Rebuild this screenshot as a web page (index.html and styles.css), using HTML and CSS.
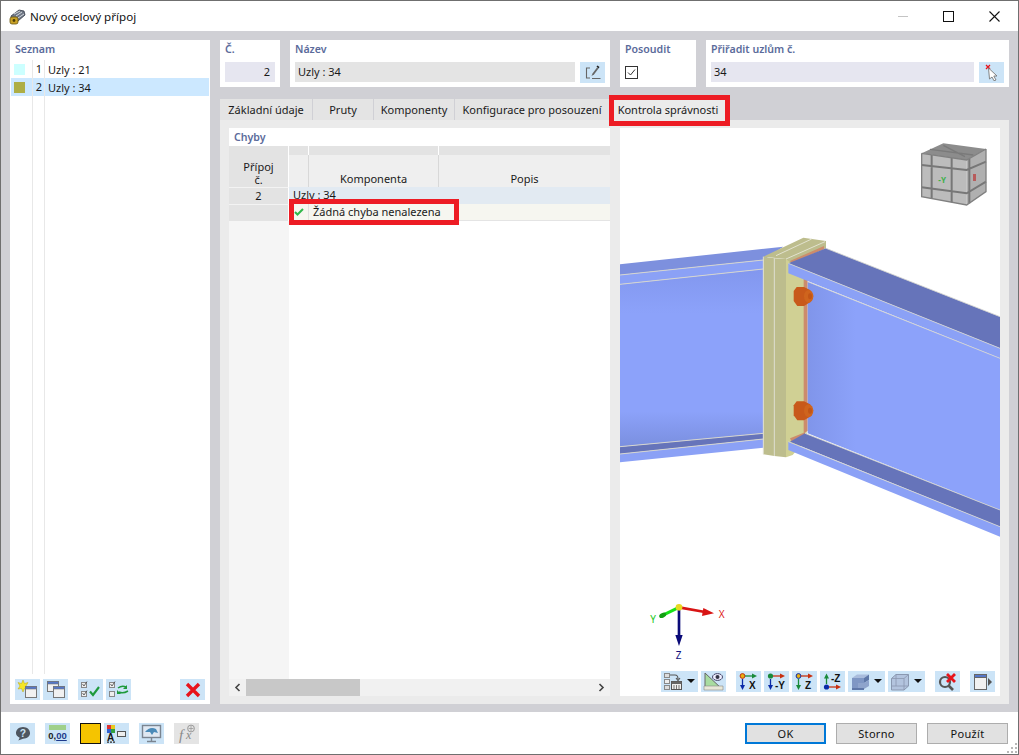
FILE: index.html
```html
<!DOCTYPE html>
<html lang="cs">
<head>
  <meta charset="UTF-8" />
  <title>Nový ocelový přípoj</title>
  <link rel="stylesheet" href="styles.css">
</head>
<body>
  <div class="window">
    <div class="titlebar">
      <svg class="app-icon" width="17" height="17" viewBox="0 0 17 17">
        <path d="M2 8 10 2 15 3 16 7 9 13 3 13Z" fill="#6f7785" stroke="#333a46" stroke-width=".8"/>
        <path d="M5 6 11 3M7 8 13 4M9 10 15 6" stroke="#d5d9df" stroke-width="1"/>
        <rect x="1" y="9" width="8" height="7" rx="2" fill="#c9a227" stroke="#6b5510" stroke-width=".8"/>
        <circle cx="5" cy="12.5" r="1.4" fill="#4d3d08"/>
      </svg>
      <span class="title-text">Nový ocelový přípoj</span>
      <div class="win-controls">
        <span class="win-min"></span>
        <span class="win-max"></span>
        <svg class="win-close" width="11" height="11" viewBox="0 0 11 11"><path d="M.5.5 10.5 10.5M10.5.5.5 10.5" stroke="#111" stroke-width="1.1"/></svg>
      </div>
    </div>

    <div class="main">
      <div class="list-panel">
        <div class="label">Seznam</div>
        <div class="list-rows">
          <div class="list-row"><span class="swatch swatch-cyan"></span><span class="list-no">1</span><span class="list-name">Uzly : 21</span></div>
          <div class="list-row selected"><span class="swatch swatch-olive"></span><span class="list-no">2</span><span class="list-name">Uzly : 34</span></div>
          <div class="list-rest"><span></span><span></span></div>
        </div>
        <div class="list-tools">
          <button class="tool">
            <svg width="21" height="19" viewBox="0 0 21 19"><path d="M6 0 7.500 3.500 11 2.500 9 6 11 9 7.500 8.500 6 12 4.500 8.500 1 9 3 6 1 2.500 4.500 3.500Z" fill="#f5e625" stroke="#b9a514" stroke-width=".5"/><rect x="8.500" y="6.500" width="11" height="11" fill="#f1f1f1" stroke="#777"/><rect x="8.500" y="6.500" width="11" height="2.500" fill="#5577c8" stroke="#777" stroke-width=".6"/></svg>
          </button>
          <button class="tool">
            <svg width="21" height="19" viewBox="0 0 21 19"><rect x="2.500" y="1.500" width="11" height="10" fill="#f1f1f1" stroke="#777"/><rect x="2.500" y="1.500" width="11" height="2.500" fill="#5577c8" stroke="#777" stroke-width=".6"/><rect x="8.500" y="6.500" width="11" height="11" fill="#f1f1f1" stroke="#777"/><rect x="8.500" y="6.500" width="11" height="2.500" fill="#5577c8" stroke="#777" stroke-width=".6"/></svg>
          </button>
          <button class="tool tool-gap">
            <svg width="21" height="19" viewBox="0 0 21 19"><rect x="1.500" y="2.500" width="5" height="5" fill="#eee" stroke="#888"/><rect x="1.500" y="11.500" width="5" height="5" fill="#eee" stroke="#888"/><path d="M2.500 4 4 6 7 1.500M2.500 13 4 15 7 10.500" fill="none" stroke="#444" stroke-width=".8"/><path d="M10 11.500 13 15 19 7" fill="none" stroke="#1f9a3c" stroke-width="2.100"/></svg>
          </button>
          <button class="tool">
            <svg width="21" height="19" viewBox="0 0 21 19"><rect x="1.500" y="2.500" width="5" height="5" fill="#eee" stroke="#888"/><rect x="1.500" y="11.500" width="5" height="5" fill="#eee" stroke="#888"/><path d="M2.500 4 4 6 7 1.500" fill="none" stroke="#444" stroke-width=".8"/><path d="M10 8Q14 5 18 7M20 11Q15 14 11 12" fill="none" stroke="#1f9a3c" stroke-width="1.500"/><path d="M19 5V9H15ZM9 10V14H13Z" fill="#1f9a3c"/></svg>
          </button>
          <button class="tool tool-end">
            <svg width="16" height="16" viewBox="0 0 16 16"><path d="M2 2 14 14M14 2 2 14" stroke="#e8141c" stroke-width="3.400"/></svg>
          </button>
        </div>
      </div>

      <div class="content">
        <div class="cards">
          <div class="card card-no">
            <div class="label">Č.</div>
            <div class="field-row"><div class="field field-blue field-right">2</div></div>
          </div>
          <div class="card card-name">
            <div class="label">Název</div>
            <div class="field-row">
              <div class="field field-gray">Uzly : 34</div>
              <button class="tool">
                <svg width="16" height="15" viewBox="0 0 16 15"><path d="M5 3H1.500V13H5M7 13.500H15.500" fill="none" stroke="#666" stroke-width="1.100"/><path d="M6.500 11 7.500 8.500 12 2.500 13.500 3.500 9 9.500Z" fill="#666"/><path d="M11.500 1.500 12.500.5 14.500 2 13.500 3.500Z" fill="#222"/></svg>
              </button>
            </div>
          </div>
          <div class="card card-check">
            <div class="label">Posoudit</div>
            <svg class="checkbox" width="13" height="13" viewBox="0 0 13 13"><rect x=".5" y=".5" width="12" height="12" fill="#fff" stroke="#333"/><path d="M3 6.500 5.500 9 10 3.500" fill="none" stroke="#333"/></svg>
          </div>
          <div class="card card-assign">
            <div class="label">Přiřadit uzlům č.</div>
            <div class="field-row">
              <div class="field field-blue">34</div>
              <button class="tool">
                <svg width="16" height="17" viewBox="0 0 16 17"><path d="M2 1 6 5M6 1 2 5" stroke="#e8141c" stroke-width="1.300"/><path d="M4.500 4 13 12 9.800 12 12 16 10 16.800 8 13 5.500 15Z" fill="#fff" stroke="#777" stroke-width=".9"/></svg>
              </button>
            </div>
          </div>
        </div>

        <div class="tabs">
          <div class="tab tab-basic">Základní údaje</div>
          <div class="tab tab-members">Pruty</div>
          <div class="tab tab-comps">Komponenty</div>
          <div class="tab tab-config">Konfigurace pro posouzení</div>
          <div class="tab tab-check">Kontrola správnosti</div>
        </div>

        <div class="panel">
          <div class="errors">
            <div class="label errors-title">Chyby</div>
            <div class="err-band"><span></span><span></span><span></span><span></span></div>
            <div class="err-head">
              <div class="err-no">Přípoj<br>č.</div>
              <div class="err-icon"></div>
              <div class="err-col">Komponenta</div>
              <div class="err-col err-last">Popis</div>
            </div>
            <div class="err-row">
              <div class="err-left">2</div>
              <div class="err-group">Uzly : 34</div>
            </div>
            <div class="err-row">
              <div class="err-left"></div>
              <div class="err-ok">
                <div class="err-mark"><svg width="10" height="8" viewBox="0 0 10 8"><path d="M1 4 3.500 6.500 9 1" fill="none" stroke="#2fb84a" stroke-width="2"/></svg></div>
                <div class="err-msg">Žádná chyba nenalezena</div>
              </div>
            </div>
            <div class="err-fill"><div class="err-left"></div></div>
            <div class="scrollbar">
              <span class="scroll-arrow">
                <svg width="7" height="9" viewBox="0 0 7 9"><path d="M5.500 1 2 4.500 5.500 8" fill="none" stroke="#444" stroke-width="1.600"/></svg>
              </span>
              <div class="scroll-track"><div class="scroll-thumb"></div></div>
              <span class="scroll-arrow">
                <svg width="7" height="9" viewBox="0 0 7 9"><path d="M1.500 1 5 4.500 1.500 8" fill="none" stroke="#444" stroke-width="1.600"/></svg>
              </span>
            </div>
          </div>

          <div class="viewport">
            <svg class="scene" width="380" height="568" viewBox="0 -291 1140 1704">
              <defs>
                <linearGradient id="webLeft" x1="0" y1="0" x2="0" y2="1">
                  <stop offset="0" stop-color="#8297ee"/>
                  <stop offset=".25" stop-color="#8ca2fa"/>
                  <stop offset=".8" stop-color="#8ca2fa"/>
                  <stop offset="1" stop-color="#7a8fdf"/>
                </linearGradient>
                <linearGradient id="webRight" x1="0" y1="0" x2="1" y2="0">
                  <stop offset="0" stop-color="#8095ea"/>
                  <stop offset=".25" stop-color="#8ca2fa"/>
                  <stop offset="1" stop-color="#8ca2fa"/>
                </linearGradient>
              </defs>
              <!-- left beam -->
              <path d="M0 118 490 65 430 105 0 150Z" fill="#7d90de"/>
              <path d="M0 150 430 105V132L0 178Z" fill="#8ba1f6"/>
              <path d="M0 178 430 132V625L0 665Z" fill="url(#webLeft)"/>
              <path d="M0 665 430 625V642L0 687Z" fill="#6674ba"/>
              <path d="M0 687 430 642V668L0 712Z" fill="#8ba1f6"/>
              <path d="M0 150 430 105M0 178 430 132M0 665 430 625M0 687 430 642" stroke="#d5d5cf" stroke-width="3" fill="none"/>
              <!-- end plate -->
              <path d="M498 100 560 100V640L518 690 498 697Z" fill="#d0d094"/>
              <path d="M430 95 550 38 618 48V70L510 112 498 102Z" fill="#bdbd8d"/>
              <path d="M468 92 575 42M498 102 615 50" stroke="#e2e2cf" stroke-width="3" fill="none"/>
              <path d="M430 95 463 100 498 102V697L463 693 430 688Z" fill="#bdbd8d"/>
              <path d="M430 95V688M463 100V693" stroke="#deded0" stroke-width="3" fill="none"/>
              <path d="M510 108 612 63V73L515 115Z" fill="#cc8c6c"/>
              <path d="M551 160H563V618L551 625Z" fill="#cc8c6c"/>
              <path d="M510 640 555 622V632L515 650Z" fill="#cc8c6c"/>
              <!-- right beam -->
              <path d="M505 115 618 70 1140 275V370Z" fill="#6674ba"/>
              <path d="M505 115 1140 370V400L505 145Z" fill="#8ba1f6"/>
              <path d="M563 170 1140 400V855L563 625Z" fill="url(#webRight)"/>
              <path d="M510 650 555 625 1140 855V905Z" fill="#6674ba"/>
              <path d="M505 650 1140 905V935L505 675Z" fill="#8ba1f6"/>
              <path d="M505 115 1140 370M563 170 1140 400M555 625 1140 855M505 650 1140 905M618 70 1140 275" stroke="#d5d5cf" stroke-width="2.500" fill="none"/>
              <!-- bolts -->
              <g>
                <path d="M530 186H552L570 195 580 213 570 232 552 243H532L521 228V198Z" fill="#c8591a"/>
                <ellipse cx="566" cy="214" rx="14" ry="19" fill="#cf641d"/>
                <ellipse cx="570" cy="214" rx="6" ry="9" fill="#c25516"/>
              </g>
              <g>
                <path d="M530 529H552L570 538 580 556 570 575 552 586H532L521 571V541Z" fill="#c8591a"/>
                <ellipse cx="566" cy="557" rx="14" ry="19" fill="#cf641d"/>
                <ellipse cx="570" cy="557" rx="6" ry="9" fill="#c25516"/>
              </g>

              <!-- view cube -->
              <g transform="translate(180 -675)">
                <path d="M725 460 790 430 918 447 860 480Z" fill="#8c8c8c"/>
                <path d="M725 460 860 480V615L725 590Z" fill="#bcbcbc"/>
                <path d="M860 480 918 447V575L860 615Z" fill="#b0b0b0"/>
                <path d="M725 495 860 510 918 485M725 562 860 580 918 545M755 465V597M815 473V607M868 476V610" fill="none" stroke="#777" stroke-width="6"/>
                <path d="M725 460 860 480 918 447M725 460V590L860 615 918 575V447" fill="none" stroke="#808080" stroke-width="4"/>
                <path d="M750 448 880 465M790 436 855 470" stroke="#7a7a7a" stroke-width="4"/>
                <text x="775" y="548" class="cube-y">-Y</text>
                <rect x="879" y="522" width="9" height="21" fill="#b85c5c"/>
              </g>

              <!-- axes -->
              <g transform="translate(60 1095)">
                <path d="M117 52V140" stroke="#0a0a78" stroke-width="8"/>
                <path d="M106 135H128L117 168Z" fill="#0a0a78"/>
                <path d="M117 52 195 66" stroke="#d81414" stroke-width="8"/>
                <path d="M190 54 222 70 186 78Z" fill="#d81414"/>
                <path d="M117 52 72 74" stroke="#18e018" stroke-width="9"/>
                <ellipse cx="68" cy="76" rx="11" ry="7" fill="#12a012" transform="rotate(-25 68 76)"/>
                <circle cx="117" cy="52" r="10" fill="#e8d820"/>
                <text x="236" y="84" class="axis axis-x">X</text>
                <text x="31" y="99" class="axis axis-y">Y</text>
                <text x="107" y="208" class="axis axis-z">Z</text>
              </g>
            </svg>

            <div class="view-tools">
              <button class="tool tool-drop">
                <svg width="20" height="19" viewBox="0 0 20 19"><rect x="1.500" y="1.500" width="5" height="4" fill="#ddd" stroke="#888"/><rect x="1.500" y="7.500" width="5" height="4" fill="#eee" stroke="#888"/><rect x="1.500" y="13.500" width="5" height="4" fill="#ddd" stroke="#888"/><path d="M7 3H12Q15 3 15 7M13 6 15 8.500 17 6" fill="none" stroke="#555" stroke-width="1.100"/><rect x="8.500" y="9.500" width="10" height="8" fill="#eee" stroke="#555"/><rect x="8.500" y="9.500" width="10" height="2.500" fill="#666"/><path d="M11 13V17M13.500 13V17M16 13V17" stroke="#777"/></svg>
                <span class="caret"></span>
              </button>
              <button class="tool">
                <svg width="21" height="19" viewBox="0 0 21 19"><path d="M2 1V17H19Z" fill="#a8dca0" stroke="#666"/><path d="M1 14H20V18H1Z" fill="#e8e8d8" stroke="#888" stroke-width=".6"/><ellipse cx="14.500" cy="5" rx="5" ry="3.400" fill="#eef" stroke="#446"/><circle cx="14.500" cy="5" r="2" fill="#334"/></svg>
              </button>
              <button class="tool tool-gap-m">
                <svg width="19" height="17" viewBox="0 0 19 17"><circle cx="3.500" cy="3" r="2.400" fill="#e8b010" stroke="#c03010"/><path d="M6 3H14" stroke="#1a8a3a" stroke-width="1.300"/><path d="M13 .5 18 3 13 5.500Z" fill="#1a8a3a"/><path d="M3.500 6V13" stroke="#0a2aa8" stroke-width="1.300"/><path d="M1 12H6L3.500 17Z" fill="#0a2aa8"/><text x="10" y="16" class="axis-tag">X</text></svg>
              </button>
              <button class="tool">
                <svg width="19" height="17" viewBox="0 0 19 17"><circle cx="3.500" cy="3" r="2.600" fill="#1a8a3a"/><path d="M6 3H14" stroke="#c83010" stroke-width="1.300"/><path d="M13 .5 18 3 13 5.500Z" fill="#c83010"/><path d="M3.500 6V13" stroke="#0a2aa8" stroke-width="1.300"/><path d="M1 12H6L3.500 17Z" fill="#0a2aa8"/><text x="8" y="16" class="axis-tag">-Y</text></svg>
              </button>
              <button class="tool">
                <svg width="19" height="17" viewBox="0 0 19 17"><circle cx="3.500" cy="3" r="2.400" fill="#e8b010" stroke="#0a2aa8"/><path d="M6 3H14" stroke="#c83010" stroke-width="1.300"/><path d="M13 .5 18 3 13 5.500Z" fill="#c83010"/><path d="M3.500 6V13" stroke="#1a8a3a" stroke-width="1.300"/><path d="M1 12H6L3.500 17Z" fill="#1a8a3a"/><text x="10" y="16" class="axis-tag">Z</text></svg>
              </button>
              <button class="tool">
                <svg width="19" height="17" viewBox="0 0 19 17"><circle cx="3.500" cy="14" r="2.600" fill="#0a2aa8"/><path d="M6 14H14" stroke="#c83010" stroke-width="1.300"/><path d="M13 11.500 18 14 13 16.500Z" fill="#c83010"/><path d="M3.500 11V5" stroke="#1a8a3a" stroke-width="1.300"/><path d="M1 5.500H6L3.500 .5Z" fill="#1a8a3a"/><text x="8" y="9" class="axis-tag">-Z</text></svg>
              </button>
              <button class="tool tool-drop">
                <svg width="20" height="18" viewBox="0 0 20 18"><path d="M2 5 7 1.500H19L14 5Z" fill="#a9bcdc"/><path d="M2 5H14V10H8V15H2Z" fill="#7f97c4"/><path d="M14 5 19 1.500V7L14 10Z" fill="#5f78a8"/><path d="M8 10H14L19 7V13L14 16H8Z" fill="#8ea4cc"/><path d="M2 15H14V17H2Z" fill="#5f78a8"/></svg>
                <span class="caret"></span>
              </button>
              <button class="tool tool-drop">
                <svg width="20" height="18" viewBox="0 0 20 18"><path d="M1.500 5.500 6 1.500H18.500V13L14 17H1.500Z" fill="#b3c4de" stroke="#8a98b0"/><path d="M1.500 5.500H14V17M14 5.500 18.500 1.500M6 1.500V13H1.500M6 13H18.500" fill="none" stroke="#8a98b0" stroke-width=".8"/></svg>
                <span class="caret"></span>
              </button>
              <button class="tool tool-gap-m">
                <svg width="19" height="18" viewBox="0 0 19 18"><circle cx="7" cy="9" r="5" fill="none" stroke="#555" stroke-width="2.200"/><path d="M10.500 12.500 15 17" stroke="#555" stroke-width="2.600"/><path d="M9 1 17 9M17 1 9 9" stroke="#e8141c" stroke-width="2.800"/></svg>
              </button>
              <button class="tool tool-gap-m">
                <svg width="20" height="18" viewBox="0 0 20 18"><rect x="1.500" y="1.500" width="12" height="15" fill="#f1f1f1" stroke="#666"/><rect x="1.500" y="1.500" width="12" height="3" fill="#5577c8" stroke="#666"/><path d="M15 5 19 9 15 13Z" fill="#555"/></svg>
              </button>
            </div>
          </div>
        </div>
      </div>
    </div>

    <div class="footer">
      <div class="footer-tools">
        <button class="tool">
          <svg width="16" height="15" viewBox="0 0 17 16"><path d="M8.500 1C13 1 16 4 16 7.500 16 11 13 13.500 8.500 13.500L3.500 15.500 5 12.500C2.500 11.500 1 9.500 1 7.500 1 4 4 1 8.500 1Z" fill="#4e5660"/><text x="8.500" y="11.500" class="help-q">?</text></svg>
        </button>
        <button class="tool tool-nums">
          <span class="ruler"></span>
          <span class="nums">0,<u>00</u></span>
        </button>
        <span class="color-box"></span>
        <button class="tool tool-near">
          <svg width="21" height="19" viewBox="0 0 21 19"><rect x="1" y="1" width="4" height="4" fill="#e03030"/><rect x="5" y="1" width="4" height="4" fill="#e8c820"/><rect x="1" y="5" width="4" height="4" fill="#3060d0"/><rect x="5" y="5" width="4" height="4" fill="#30a040"/><text x="1" y="17" class="axis-tag">A</text><rect x="1" y="17.500" width="2" height="1.200" fill="#222"/><rect x="4" y="17.500" width="2" height="1.200" fill="#222"/><rect x="7" y="17.500" width="2" height="1.200" fill="#222"/><rect x="11.500" y="7.500" width="8" height="5" fill="#eee" stroke="#555"/></svg>
        </button>
        <button class="tool">
          <svg width="21" height="19" viewBox="0 0 21 19"><rect x="1.500" y="1.500" width="18" height="12" fill="#dfe8f2" stroke="#7a8490" stroke-width="1.400"/><path d="M4 8Q9 2 15 5L17 9 13 8 11 11 9 8Z" fill="#4a8ab8"/><path d="M10.500 14V17M6 17.500H15" stroke="#7a8490" stroke-width="1.400"/></svg>
        </button>
        <button class="tool tool-off">
          <svg width="21" height="19" viewBox="0 0 21 19"><text x="3" y="16" class="fx">f</text><text x="10" y="15" class="fx fx-small">x</text><circle cx="15" cy="4.500" r="3.400" fill="none" stroke="#999"/><path d="M12.500 4.500H17.500M15 2V7" stroke="#999" stroke-width=".8"/></svg>
        </button>
      </div>
      <div class="footer-btns">
        <button class="btn btn-default">OK</button>
        <button class="btn">Storno</button>
        <button class="btn">Použít</button>
      </div>
      <svg class="grip" width="11" height="11" viewBox="0 0 11 11"><path d="M8 0h2v2H8zM8 4h2v2H8zM4 4h2v2H4zM8 8h2v2H8zM4 8h2v2H4zM0 8h2v2H0z" fill="#b8b8b8"/></svg>
    </div>

    <div class="mark mark-tab"></div>
    <div class="mark mark-msg"></div>
  </div>
</body>
</html>
```

FILE: styles.css
```css
* {
  box-sizing: border-box;
}

html, body {
  margin: 0;
  padding: 0;
}

body {
  width: 1019px;
  height: 755px;
  overflow: hidden;
  background: #fff;
  color: #1a1a1a;
  font-family: "Noto Sans", "Open Sans", sans-serif;
  font-size: 11px;
}

.window {
  position: relative;
  display: flex;
  flex-direction: column;
  width: 1019px;
  height: 755px;
  border: 1px solid #6f6f6f;
}

.titlebar {
  display: flex;
  align-items: center;
  flex: 0 0 30px;
  padding-left: 8px;
  background: #fff;
}

.app-icon {
  margin-right: 4px;
}

.title-text {
  font-size: 11.6px;
  color: #111;
}

.win-controls {
  display: flex;
  align-items: center;
  margin-left: auto;
}

.win-min {
  width: 10px;
  height: 1px;
  margin-right: 35px;
  background: #c4c4c4;
}

.win-max {
  width: 11px;
  height: 11px;
  margin-right: 35px;
  border: 1px solid #111;
}

.win-close {
  margin-right: 18px;
}

.main {
  display: flex;
  flex: 0 0 681px;
  gap: 10px;
  padding: 9px 9px 8px;
  background: #d0d0d5;
}

.label {
  font-size: 10.6px;
  font-weight: 600;
  color: #5b6b9b;
  line-height: 18px;
}

.list-panel {
  display: flex;
  flex-direction: column;
  flex: 0 0 200px;
  background: #fff;
}

.list-panel > .label {
  padding-left: 5px;
  height: 20px;
}

.list-rows {
  display: flex;
  flex-direction: column;
  flex: 1;
  padding: 0 1px;
}

.list-row {
  display: flex;
  align-items: center;
  height: 18px;
}

.list-row.selected {
  background: #cce8ff;
}

.swatch {
  width: 11px;
  height: 11px;
  margin-left: 3px;
}

.swatch-cyan {
  background: #ccffff;
}

.swatch-olive {
  background: #aeae45;
}

.list-no {
  width: 13px;
  height: 100%;
  margin-left: 7px;
  padding-right: 2px;
  text-align: right;
  line-height: 18px;
  border-left: 1px solid #e8e8e8;
  border-right: 1px solid #e8e8e8;
}

.list-name {
  padding-left: 3px;
}

.list-rest {
  display: flex;
  flex: 1;
  padding-left: 21px;
}

.list-rest span {
  width: 1px;
  margin-right: 11px;
  background: #e8e8e8;
}

.list-tools {
  display: flex;
  gap: 3px;
  flex: 0 0 30px;
  padding: 5px 5px 4px;
}

.tool {
  position: relative;
  display: flex;
  align-items: center;
  justify-content: center;
  flex: 0 0 25px;
  width: 25px;
  height: 21px;
  padding: 0;
  border: 0;
  background: #cce4f7;
}

.tool-gap {
  margin-left: 7px;
}

.tool-end {
  margin-left: auto;
}

.content {
  display: flex;
  flex-direction: column;
  flex: 1;
  min-width: 0;
}

.cards {
  display: flex;
  gap: 10px;
  flex: 0 0 47px;
}

.card {
  padding: 0 5px;
  background: #fff;
}

.card-no {
  flex: 0 0 60px;
}

.card-name {
  flex: 0 0 320px;
}

.card-check {
  flex: 0 0 76px;
}

.card-assign {
  flex: 1;
}

.card .label {
  height: 22px;
}

.field-row {
  display: flex;
  gap: 5px;
}

.field {
  flex: 1;
  height: 20px;
  padding: 0 3px;
  line-height: 20px;
}

.field-blue {
  background: #e6e6f0;
}

.field-gray {
  background: #e4e4e4;
}

.field-right {
  padding-right: 5px;
  text-align: right;
}

.checkbox {
  display: block;
  margin-top: 4px;
}

.tabs {
  display: flex;
  gap: 1px;
  flex: 0 0 21px;
  margin-top: 12px;
}

.tab {
  background: #e4e4e4;
  line-height: 21px;
  text-align: center;
}

.tab-basic {
  width: 92px;
}

.tab-members {
  width: 60px;
}

.tab-comps {
  width: 80px;
}

.tab-config {
  width: 154px;
}

.tab-check {
  width: 116px;
  background: #ebebeb;
}

.panel {
  display: flex;
  gap: 10px;
  flex: 1;
  min-height: 0;
  padding: 8px 9px;
  background: #ebebeb;
}

.errors {
  display: flex;
  flex-direction: column;
  flex: 0 0 381px;
  background: #fff;
}

.errors-title {
  flex: 0 0 18px;
  padding-left: 5px;
}

.err-band {
  display: flex;
  gap: 1px;
  flex: 0 0 9px;
}

.err-band span {
  background: #e3e3e3;
}

.err-band span:nth-child(1) {
  flex: 0 0 59px;
}

.err-band span:nth-child(2) {
  flex: 0 0 19px;
}

.err-band span:nth-child(3) {
  flex: 0 0 129px;
}

.err-band span:nth-child(4) {
  flex: 1;
}

.err-head {
  display: flex;
  flex: 0 0 32px;
  background: #efefef;
  text-align: center;
  line-height: 13px;
}

.err-no {
  flex: 0 0 60px;
  padding-top: 5px;
  background: #e3e3e3;
  border-right: 1px solid #fff;
}

.err-icon {
  flex: 0 0 20px;
  border-right: 1px solid #d8d8d8;
}

.err-col {
  flex: 0 0 130px;
  padding-top: 17px;
  border-right: 1px solid #d8d8d8;
}

.err-last {
  flex: 1;
  border-right: 0;
}

.err-row {
  display: flex;
  flex: 0 0 16px;
  line-height: 16px;
}

.err-left {
  flex: 0 0 60px;
  background: #e3e3e3;
  border-top: 1px solid #f3f3f3;
  border-right: 1px solid #fff;
  text-align: center;
}

.err-group {
  flex: 1;
  padding-left: 4px;
  background: #e2eaf2;
}

.err-ok {
  display: flex;
  flex: 1;
  background: #f6f6f0;
  border-bottom: 1px solid #e4e4e4;
}

.err-mark {
  display: flex;
  align-items: center;
  justify-content: center;
  flex: 0 0 20px;
  border-right: 1px solid #e0e0e0;
}

.err-msg {
  padding-left: 4px;
}

.err-fill {
  display: flex;
  flex: 1;
}

.err-fill .err-left {
  background: #f5f5f5;
  border: 0;
}

.scrollbar {
  display: flex;
  align-items: stretch;
  flex: 0 0 17px;
  background: #f1f1f1;
}

.scroll-arrow {
  display: flex;
  align-items: center;
  justify-content: center;
  flex: 0 0 17px;
}

.scroll-track {
  flex: 1;
}

.scroll-thumb {
  width: 114px;
  height: 100%;
  background: #c8c8c8;
}

.viewport {
  position: relative;
  display: flex;
  flex: 1;
  background: #fff;
}

.scene {
  position: absolute;
  top: 0;
  left: 0;
}

.cube-y {
  font-size: 24px;
  font-weight: 700;
  fill: #3cb04a;
}

.axis {
  font-size: 30px;
}

.axis-x {
  fill: #e02020;
}

.axis-y {
  fill: #22c822;
}

.axis-z {
  fill: #12127e;
}

.view-tools {
  position: relative;
  display: flex;
  gap: 3px;
  align-self: flex-end;
  margin: 0 0 4px 41px;
}

.tool-drop {
  flex: 0 0 37px;
  width: 37px;
  justify-content: flex-start;
  padding-left: 2px;
}

.tool-gap-m {
  margin-left: 7px;
}

.caret {
  position: absolute;
  top: 8px;
  right: 3px;
  width: 0;
  height: 0;
  border-left: 4px solid transparent;
  border-right: 4px solid transparent;
  border-top: 4px solid #111;
}

.axis-tag {
  font-size: 10px;
  font-weight: 700;
  fill: #111;
}

.footer {
  position: relative;
  display: flex;
  align-items: center;
  flex: 1;
  padding: 0 10px 0 9px;
  background: #fff;
}

.footer-tools {
  display: flex;
  align-items: center;
  gap: 10px;
}

.color-box {
  width: 21px;
  height: 21px;
  border: 1px solid #111;
  background: #f5c400;
}

.tool-near {
  margin-left: -7px;
}

.tool-nums {
  flex-direction: column;
  justify-content: flex-start;
  padding-top: 2px;
}

.ruler {
  width: 17px;
  height: 5px;
  background: #9fd08a;
}

.nums {
  font-size: 9.5px;
  font-weight: 600;
  line-height: 12px;
  color: #222;
}

.nums u {
  color: #1d3a8c;
}

.help-q {
  font-size: 11px;
  font-weight: 700;
  fill: #cce4f7;
  text-anchor: middle;
}

.tool-off {
  background: #e4e4e4;
}

.fx {
  font-family: "Liberation Serif", serif;
  font-style: italic;
  font-size: 15px;
  fill: #8a8a8a;
}

.fx-small {
  font-size: 12px;
}

.footer-btns {
  display: flex;
  gap: 10px;
  margin-left: auto;
}

.btn {
  width: 81px;
  height: 21px;
  padding: 0;
  border: 1px solid #adadad;
  background: #e1e1e1;
  color: #111;
  font: inherit;
  letter-spacing: 0.3px;
}

.btn-default {
  border: 2px solid #0078d7;
}

.grip {
  position: absolute;
  right: 0;
  bottom: 0;
}

.mark {
  position: absolute;
  border: 5px solid #ed1c24;
  pointer-events: none;
}

.mark-tab {
  top: 94px;
  left: 608px;
  width: 121px;
  height: 31px;
}

.mark-msg {
  top: 198px;
  left: 288px;
  width: 170px;
  height: 26px;
}
```
